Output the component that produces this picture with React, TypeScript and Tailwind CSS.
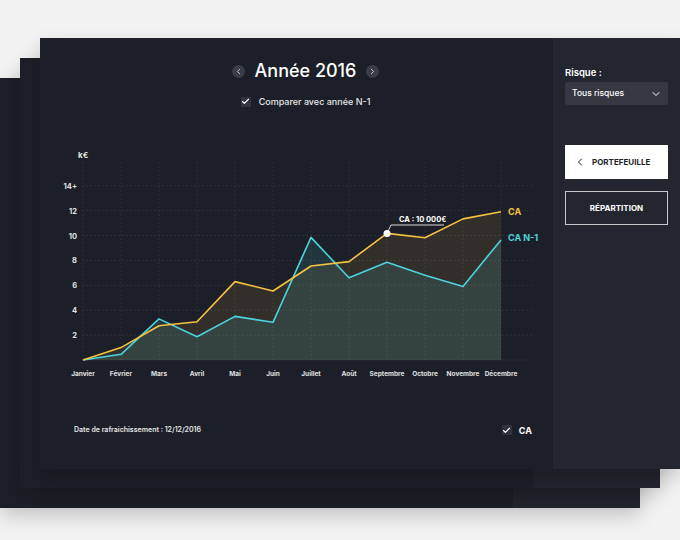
import { ChevronDown, ChevronLeft, ChevronRight, Check } from "lucide-react";

const months = [
  "Janvier",
  "Février",
  "Mars",
  "Avril",
  "Mai",
  "Juin",
  "Juillet",
  "Août",
  "Septembre",
  "Octobre",
  "Novembre",
  "Décembre",
];
const ca = [0, 1, 2.75, 3.08, 6.3, 5.54, 7.55, 7.9, 10.17, 9.82, 11.33, 11.9];
const caN1 = [0, 0.46, 3.3, 1.87, 3.5, 3.03, 9.85, 6.6, 7.85, 6.8, 5.9, 9.65];

const px = (i: number) => 43 + 38 * i;
const py = (v: number) => 215 - 12.45 * v;

const line = (data: number[]) =>
  data.map((v, i) => `${i === 0 ? "M" : "L"}${px(i)},${py(v).toFixed(1)}`).join(" ");
const area = (data: number[]) => `${line(data)} L${px(11)},215 L${px(0)},215 Z`;

const CheckBox = () => (
  <span className="flex h-[10px] w-[10px] items-center justify-center bg-[#30333b]">
    <Check size={9} strokeWidth={3} className="text-white" />
  </span>
);

const Chart = () => (
  <svg width="513" height="240" className="block">
    <text x="38" y="13" fill="#e5e5e5" fontSize="8" fontWeight="700">
      k€
    </text>
    {months.map((_, i) => (
      <line key={i} x1={px(i)} y1="17" x2={px(i)} y2="215" stroke="#2d313a" strokeDasharray="2 2" />
    ))}
    {[2, 4, 6, 8, 10, 12, 14].map((v) => (
      <line key={v} x1="42" y1={py(v)} x2="493" y2={py(v)} stroke="#2d313a" strokeDasharray="2 2" />
    ))}
    <line x1="42" y1="215" x2="493" y2="215" stroke="#2d313a" strokeDasharray="2 2" />
    {[2, 4, 6, 8, 10, 12, 14].map((v) => (
      <text key={v} x="37" y={py(v) + 3} fill="#e0e0e0" fontSize="7.5" fontWeight="700" textAnchor="end">
        {v === 14 ? "14+" : v}
      </text>
    ))}
    <path d={area(ca)} fill="#f5c342" fillOpacity="0.1" />
    <path d={area(caN1)} fill="#4dd3dc" fillOpacity="0.12" />
    <path d={line(caN1)} fill="none" stroke="#4dd3dc" strokeWidth="1.6" strokeLinejoin="round" />
    <path d={line(ca)} fill="none" stroke="#f5c342" strokeWidth="1.6" strokeLinejoin="round" />
    <polyline points={`${px(8)},${py(ca[8])} 351,80 404,80`} fill="none" stroke="#d8d8d8" strokeWidth="1" />
    <circle cx={px(8)} cy={py(ca[8])} r="3.5" fill="#ffffff" />
    <text x="359" y="77" fill="#ffffff" fontSize="7.5" fontWeight="700">
      CA : 10 000€
    </text>
    <text x="468" y="70" fill="#f5c342" fontSize="9" fontWeight="700">
      CA
    </text>
    <text x="468" y="96" fill="#4dd3dc" fontSize="9" fontWeight="700">
      CA N-1
    </text>
    {months.map((m, i) => (
      <text key={m} x={px(i)} y="231" fill="#e0e0e0" fontSize="6.5" fontWeight="700" textAnchor="middle">
        {m}
      </text>
    ))}
  </svg>
);

const BackCard = ({ className }: { className: string }) => (
  <div className={`absolute flex h-[430px] w-[640px] shadow-[0_8px_18px_rgba(0,0,0,0.18)] ${className}`}>
    <div className="w-[513px] bg-[#1c1f27]" />
    <div className="w-[127px] bg-[#21242c]" />
  </div>
);

export default function App() {
  return (
    <div className="relative h-[540px] w-[680px] overflow-hidden bg-[#f2f2f2] font-['Inter',sans-serif]">
      <BackCard className="left-0 top-[78px]" />
      <BackCard className="left-[20px] top-[58px]" />
      <div className="relative ml-[40px] mt-[38px] flex h-[431px] w-[640px] shadow-[0_8px_18px_rgba(0,0,0,0.18)]">
        <div className="flex w-[513px] flex-col bg-[#1c1f27]">
          <div className="mt-[22px] flex items-center justify-center gap-[10px] pl-[18px]">
            <span className="flex h-[13px] w-[13px] items-center justify-center rounded-full bg-[#3a3d46]">
              <ChevronLeft size={9} strokeWidth={2.5} className="text-[#cfcfcf]" />
            </span>
            <span className="text-[18px] font-medium leading-[22px] text-white">Année 2016</span>
            <span className="flex h-[13px] w-[13px] items-center justify-center rounded-full bg-[#3a3d46]">
              <ChevronRight size={9} strokeWidth={2.5} className="text-[#cfcfcf]" />
            </span>
          </div>
          <div className="mt-[13px] flex items-center justify-center gap-[8px] pl-[18px]">
            <CheckBox />
            <span className="text-[9px] font-medium text-[#e6e6e6]">Comparer avec année N-1</span>
          </div>
          <div className="mt-[36px]">
            <Chart />
          </div>
          <div className="mt-[39px] flex items-center justify-between pl-[34px] pr-[21px]">
            <span className="text-[7px] font-semibold text-[#e6e6e6]">Date de rafraichissement : 12/12/2016</span>
            <div className="flex items-center gap-[7px]">
              <CheckBox />
              <span className="text-[9px] font-bold text-white">CA</span>
            </div>
          </div>
        </div>
        <div className="flex w-[127px] flex-col bg-[#23262e] px-[12px]">
          <span className="mt-[28px] text-[9.5px] font-semibold text-white">Risque :</span>
          <div className="mt-[2px] flex h-[23px] items-center justify-between rounded-[2px] bg-[#353841] pl-[7px] pr-[6px]">
            <span className="text-[8.5px] font-medium text-white">Tous risques</span>
            <ChevronDown size={12} strokeWidth={2} className="text-white" />
          </div>
          <div className="mt-[40px] flex h-[34px] items-center gap-[6px] bg-white pl-[9px]">
            <ChevronLeft size={12} strokeWidth={2} className="text-[#1c1f27]" />
            <span className="text-[8px] font-bold text-[#1c1f27]">PORTEFEUILLE</span>
          </div>
          <div className="mt-[12px] flex h-[34px] items-center justify-center border border-[#c8c8c8]">
            <span className="text-[8px] font-bold text-white">RÉPARTITION</span>
          </div>
        </div>
      </div>
    </div>
  );
}
